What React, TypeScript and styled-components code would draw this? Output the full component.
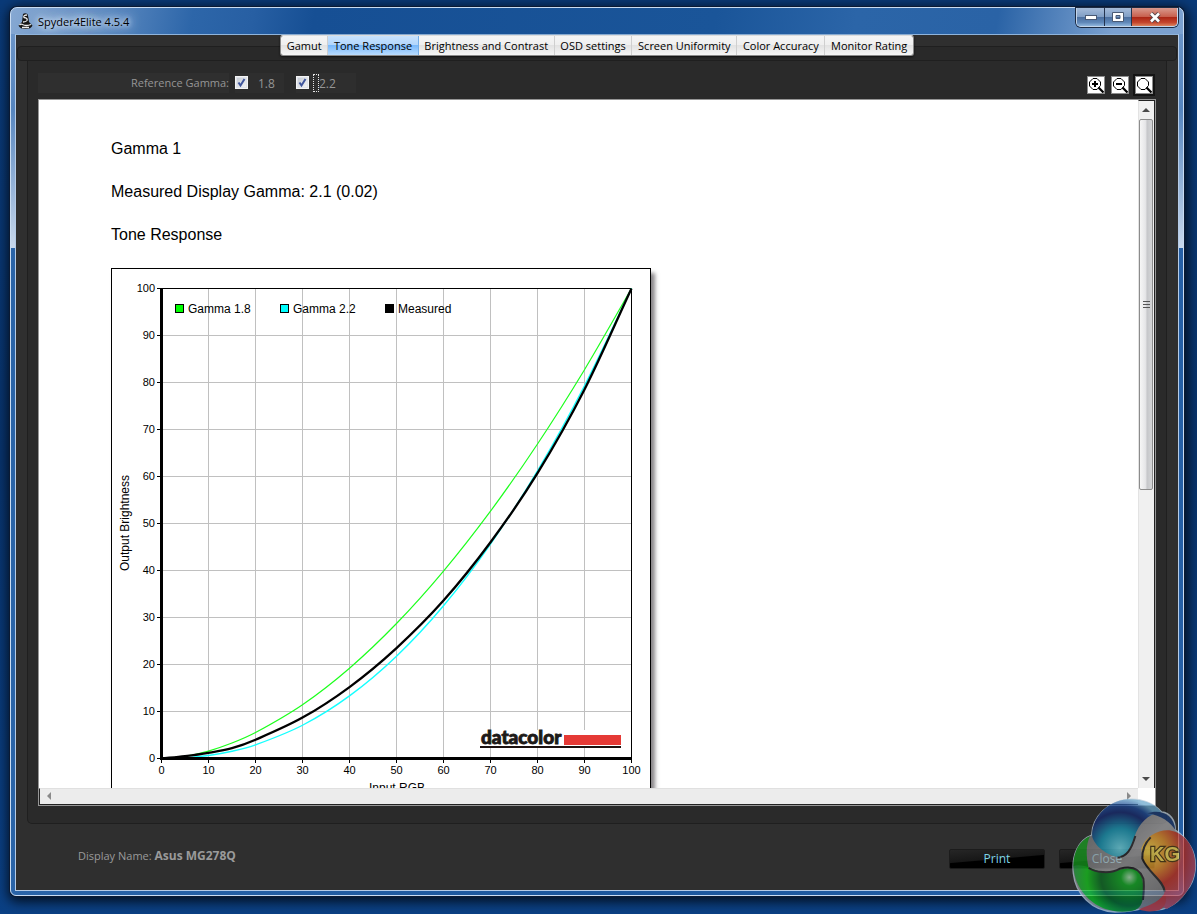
import React, { useState } from "react";
import styled, { createGlobalStyle, css } from "styled-components";

const ui = `"Open Sans", "Noto Sans", sans-serif`;
const arial = `"Liberation Sans", Arial, sans-serif`;

const GlobalStyle = createGlobalStyle`
  *, *::before, *::after { box-sizing: border-box; }
  body { margin: 0; background: #093774; font-family: ${ui}; font-size: 11px; }
  button { font: inherit; padding: 0; margin: 0; border: 0; }
  p { margin: 0; }
`;

const Desktop = styled.div`
  display: flex;
  height: 100vh;
  min-height: 480px;
  padding: 7px 13px 18px 10px;
  overflow: hidden;
  background: linear-gradient(#0a3a78, #08336c 50%, #0b4084);
`;

const Window = styled.div`
  flex: 1;
  min-width: 0;
  display: flex;
  flex-direction: column;
  padding: 0 4px 4px;
  border: 1px solid #c9dcf2;
  border-radius: 7px 7px 6px 6px;
  box-shadow: 0 0 0 1px #0b1a33, 1px 3px 12px 3px rgba(0, 0, 0, 0.75);
  background:
    linear-gradient(100deg, #86a8d2 0, #5f8cc2 90px, #2d66a9 180px, #275fa3 240px, #164f94 300px, #1a5599 60%, #2b65a8 72%, #2a63a6 84%, #7ba1d0 94%) top / 100% 26px no-repeat,
    linear-gradient(#6a94c8, #5585bf 35%, #c8d8ec) 0 26px / 100% 214px no-repeat,
    linear-gradient(90deg, #2a64a8, #1b569c 50%, #2660a6);
`;

const TitleBar = styled.header`
  display: flex;
  align-items: flex-start;
  justify-content: space-between;
  height: 26px;
  flex: none;
`;

const Title = styled.h1`
  display: flex;
  align-items: center;
  gap: 5px;
  margin: 0;
  height: 26px;
  padding-left: 3px;
  font-size: 11px;
  font-weight: 400;
  color: #000;
  text-shadow: 0 0 5px #dde9f7, 0 0 8px #dde9f7, 0 0 12px #c5d8ee, 0 0 14px #c5d8ee;
`;

const Controls = styled.div`
  display: flex;
  height: 19px;
  margin-right: 1px;
  border: 1px solid #c3d5ea;
  border-top: 0;
  border-radius: 0 0 5px 5px;
  overflow: hidden;
  box-shadow: 0 0 0 1px #1c2b44;
`;

const ControlButton = styled.button<{ $close?: boolean }>`
  width: ${(p) => (p.$close ? 46 : 27)}px;
  display: grid;
  place-items: center;
  border-left: 1px solid #24344f;
  background: ${(p) =>
    p.$close
      ? "linear-gradient(#d99a8e, #c8604e 48%, #a92414 50%, #c4442c 80%, #dc8560)"
      : "linear-gradient(#a5bcda, #819fc6 48%, #4b6f9f 50%, #5f87b8 80%, #90b6dd)"};
  &:first-child { border-left: 0; }
`;

const Client = styled.main`
  flex: 1;
  min-height: 0;
  display: flex;
  flex-direction: column;
  border: 1px solid #b5cbe6;
  border-top-color: #8fb4dc;
  background: #2f2f2f;
`;

const TabArea = styled.div`
  position: relative;
  height: 26px;
  flex: none;
  margin: 0 1px;
  display: flex;
  justify-content: center;
  align-items: flex-start;
  &::before {
    content: "";
    position: absolute;
    inset: 11px 0 0;
    border: 1px solid #1f1f1f;
    border-radius: 4px;
    background: #292929;
  }
`;

const TabList = styled.div`
  position: relative;
  display: flex;
  min-width: 634px;
  height: 21px;
  border: 1px solid #8a8a8a;
  border-top-color: #dcdcdc;
  border-radius: 3px;
  overflow: hidden;
  box-shadow: 0 1px 2px #111;
`;

const Tab = styled.button<{ $active: boolean }>`
  flex: 1 0 auto;
  padding: 0 5px;
  line-height: 19px;
  color: #000;
  white-space: nowrap;
  border-right: 1px solid #cfcfcf;
  background: linear-gradient(#f5f5f5, #efefef 48%, #e2e2e2 50%, #f6f6f6);
  &:last-child { border-right: 0; }
  ${(p) =>
    p.$active &&
    css`
      background: linear-gradient(#c8e2fd, #b3d7fc 45%, #79b9fb 50%, #b9dcff);
      border-right-color: #74aee8;
    `}
`;

const Panel = styled.section`
  flex: 1;
  min-height: 0;
  display: flex;
  flex-direction: column;
  margin: 0 11px;
  padding: 12px 10px 17px;
  border: 1px solid #1f1f1f;
  border-top: 0;
  border-radius: 0 0 5px 5px;
  background: #2a2a2a;
`;

const Toolbar = styled.div`
  flex: none;
  display: flex;
  align-items: flex-start;
  height: 26px;
  color: #959595;
`;

const ToolLabel = styled.span`
  width: 191px;
  height: 20px;
  line-height: 20px;
  text-align: right;
  background: #2f2f2f;
`;

const Options = styled.div`
  display: flex;
  gap: 12px;
  margin-left: 6px;
`;

const Option = styled.label<{ $width: number }>`
  display: flex;
  align-items: center;
  width: ${(p) => p.$width}px;
  height: 20px;
  font-size: 12px;
  background: #2e2e2e;
`;

const Check = styled.span`
  display: grid;
  width: 13px;
  height: 13px;
  margin-bottom: 2px;
  svg, input { grid-area: 1 / 1; }
  svg { pointer-events: none; }
`;

const CheckInput = styled.input`
  appearance: none;
  width: 13px;
  height: 13px;
  margin: 0;
  border: 1px solid #f4f4f4;
  background: linear-gradient(135deg, #c3c8d0, #f5f6f8);
  box-shadow: inset 0 0 0 1px #dfe3ea;
`;

const OptionText = styled.span<{ $focus?: boolean }>`
  height: 18px;
  line-height: 19px;
  margin-left: 4px;
  &::before {
    content: "";
    display: inline-block;
    vertical-align: top;
    width: 6px;
    height: 18px;
    ${(p) => p.$focus && "border: 1px dotted #e4e4e4;"}
  }
`;

const ZoomGroup = styled.div`
  display: flex;
  gap: 6px;
  margin: 3px 3px 0 auto;
`;

const ZoomButton = styled.button<{ $focus?: boolean }>`
  display: grid;
  width: 18px;
  height: 18px;
  border: 1px solid #8d8d8d;
  background: #fff;
  ${(p) => p.$focus && "box-shadow: 0 0 0 2px #141414;"}
`;

const Viewer = styled.div`
  flex: 1;
  min-height: 0;
  display: grid;
  grid-template-columns: minmax(0, 1fr) 17px;
  grid-template-rows: minmax(0, 1fr) 17px;
  border: 1px solid #969696;
  background: #fff;
`;

const Report = styled.article`
  overflow: hidden;
  padding: 39px 0 0 72px;
  font-family: ${arial};
  font-size: 16px;
  line-height: 19px;
  color: #000;
`;

const Line = styled.p`
  margin-bottom: 24px;
`;

const ChartSvg = styled.svg`
  display: block;
  background: #fff;
  box-shadow: 4px 5px 4px rgba(60, 55, 60, 0.6);
  font-family: ${arial};
`;

const Wordmark = styled.text`
  font-family: Lato, ${arial};
  font-size: 19px;
  font-weight: 900;
  stroke-width: 0.9px;
`;

const ScrollBar = styled.div<{ $horizontal?: boolean }>`
  display: flex;
  flex-direction: ${(p) => (p.$horizontal ? "row" : "column")};
  justify-content: space-between;
  background: ${(p) => (p.$horizontal ? "#ececec" : "#f0f0f0")};
  ${(p) =>
    p.$horizontal
      ? "border-bottom: 1px solid #222; border-left: 1px solid #222; border-top: 1px solid #e0e0e0;"
      : "border-right: 1px solid #222; border-top: 1px solid #222; border-left: 1px solid #e3e3e3;"}
`;

const ArrowButton = styled.button<{ $wide: boolean }>`
  flex: none;
  display: grid;
  place-items: center;
  width: ${(p) => (p.$wide ? 18 : 14)}px;
  height: ${(p) => (p.$wide ? 14 : 18)}px;
  background: transparent;
`;

const Thumb = styled.div`
  flex: 37;
  display: grid;
  place-items: center;
  margin-right: 1px;
  border: 1px solid #8c8c8c;
  border-radius: 2px;
  background: linear-gradient(90deg, #f6f6f6, #e6e6e8 45%, #c6c7ca 60%, #d5d6d8);
`;

const Track = styled.div`
  flex: 28;
`;

const Footer = styled.footer`
  flex: none;
  display: flex;
  align-items: center;
  justify-content: space-between;
  height: 66px;
  padding: 4px 23px 0 62px;
  color: #9a9a9a;
`;

const DisplayName = styled.p`
  padding-bottom: 8px;
  b { font-size: 12px; }
`;

const Actions = styled.div`
  display: flex;
  gap: 14px;
`;

const ActionButton = styled.button`
  width: 96px;
  height: 20px;
  font-size: 12px;
  line-height: 18px;
  border: 1px solid #1c1c1c;
  border-radius: 2px;
  color: #7fd6e8;
  background: linear-gradient(175deg, #262626, #171717 48%, #000 52%);
`;

const Watermark = styled.svg`
  position: fixed;
  right: 0;
  bottom: 0;
  pointer-events: none;
  opacity: 0.72;
`;

const tabs = [
  "Gamut",
  "Tone Response",
  "Brightness and Contrast",
  "OSD settings",
  "Screen Uniformity",
  "Color Accuracy",
  "Monitor Rating",
];

type Point = [number, number];

const left = 50.5;
const bottom = 490.5;
const unit = 4.7;
const steps = [0, 10, 20, 30, 40, 50, 60, 70, 80, 90, 100];

const power = (gamma: number): Point[] =>
  [0, 5, 10, 15, 20, 30, 40, 50, 60, 70, 80, 90, 100].map((v) => [v, 100 * Math.pow(v / 100, gamma)]);

const measured: Point[] = [
  [0, 0], [5, 0.5], [10, 1.2], [15, 2.2], [20, 4], [30, 8.7], [40, 15.2],
  [50, 23.5], [60, 33.6], [70, 46], [80, 60.7], [90, 78.5], [100, 100],
];

/* Smooth curve through the points, in chart coordinates. */
function curve(points: Point[]) {
  const p = points.map(([x, y]): Point => [left + x * unit, bottom - y * unit]);
  let d = `M${p[0][0]} ${p[0][1]}`;
  for (let i = 0; i < p.length - 1; i++) {
    const a = p[Math.max(i - 1, 0)];
    const b = p[i];
    const c = p[i + 1];
    const e = p[Math.min(i + 2, p.length - 1)];
    const w = c[0] - b[0];
    const s1 = (c[1] - a[1]) / (c[0] - a[0]);
    const s2 = (e[1] - b[1]) / (e[0] - b[0]);
    d += ` C${b[0] + w / 3} ${b[1] + (s1 * w) / 3} ${c[0] - w / 3} ${c[1] - (s2 * w) / 3} ${c[0]} ${c[1]}`;
  }
  return d;
}

const legend = [
  { x: 64, name: "Gamma 1.8", color: "#00ff00" },
  { x: 169, name: "Gamma 2.2", color: "#00ffff" },
  { x: 274, name: "Measured", color: "#000" },
];

function Chart() {
  return (
    <ChartSvg width="540" height="540" viewBox="0 0 540 540" role="img" aria-label="Tone Response">
      <rect x="0.5" y="0.5" width="539" height="539" fill="#fff" stroke="#000" />
      {steps.slice(1, 10).map((v) => (
        <g key={v} stroke="#c0c0c0">
          <path d={`M${left + v * unit} 20V490`} />
          <path d={`M51 ${bottom - v * unit}H520`} />
        </g>
      ))}
      <path d="M50 20.5H520.5V490" fill="none" stroke="#000" />
      <path d={curve(power(1.8))} fill="none" stroke="#1cff1c" strokeWidth="1.2" />
      <path d={curve(power(2.2))} fill="none" stroke="#14ffff" strokeWidth="1.4" />
      <path d={curve(measured)} fill="none" stroke="#000" strokeWidth="2.3" />
      <path d="M50.5 20V492M49 490.5H521" stroke="#000" strokeWidth="3" />
      {steps.map((v) => (
        <g key={v} fontSize="11">
          <path d={`M46 ${bottom - v * unit}H50M${left + v * unit} 491V495`} stroke="#000" />
          <text x="44" y={494 - v * unit} textAnchor="end">{v}</text>
          <text x={left + v * unit} y="506" textAnchor="middle">{v}</text>
        </g>
      ))}
      {legend.map((l) => (
        <g key={l.name}>
          <rect x={l.x + 0.5} y="36.5" width="8" height="8" fill={l.color} stroke="#000" />
          <text x={l.x + 13} y="45" fontSize="12">{l.name}</text>
        </g>
      ))}
      <rect x="369" y="462" width="142" height="18" fill="#fff" />
      <Wordmark x="370" y="476" fill="#1d1a18" stroke="#1d1a18">datacolor</Wordmark>
      <rect x="453" y="467" width="57" height="10" fill="#e53a36" />
      <rect x="369" y="478" width="141" height="2" fill="#1d1210" />
      <text x="286" y="524" fontSize="12" textAnchor="middle">Input RGB</text>
      <text transform="translate(18 255) rotate(-90)" fontSize="12" textAnchor="middle">Output Brightness</text>
    </ChartSvg>
  );
}

function Lens({ sign }: { sign?: "plus" | "minus" }) {
  return (
    <svg width="16" height="16" viewBox="0 0 16 16" fill="none" stroke="#000">
      <path d="M5 1.5H9L12.5 5V8.5L9 12.5H5L1.5 9V5Z" />
      <path d="M10.5 10.5L15.5 15.5" strokeWidth="2.2" />
      {sign && <path d="M4 7H10" strokeWidth="2" />}
      {sign === "plus" && <path d="M7 4V10" strokeWidth="2" />}
    </svg>
  );
}

function GammaOption({ text, width, focus }: { text: string; width: number; focus?: boolean }) {
  const [on, setOn] = useState(true);
  return (
    <Option $width={width}>
      <Check>
        <CheckInput type="checkbox" checked={on} onChange={() => setOn(!on)} />
        {on && (
          <svg width="13" height="13" viewBox="0 0 13 13">
            <path d="M3.5 6.5L5.5 9.5L9.5 3" fill="none" stroke="#3f559c" strokeWidth="2" />
          </svg>
        )}
      </Check>
      <OptionText $focus={focus}>{text}</OptionText>
    </Option>
  );
}

const arrows = { up: "M4 0L8 4H0Z", down: "M0 0H8L4 4Z", left: "M4 0V8L0 4Z", right: "M0 0L4 4L0 8Z" };

function Arrow({ dir }: { dir: keyof typeof arrows }) {
  const sideways = dir === "left" || dir === "right";
  return (
    <ArrowButton $wide={sideways} aria-label={`Scroll ${dir}`}>
      <svg width={sideways ? 4 : 8} height={sideways ? 8 : 4}>
        <path d={arrows[dir]} fill={sideways ? "#8a8a8a" : "#4a4a4a"} />
      </svg>
    </ArrowButton>
  );
}

function KitGuruMark() {
  return (
    <Watermark width="137" height="134" viewBox="0 0 411 402" aria-hidden="true">
      <defs>
        <radialGradient id="blue" gradientUnits="userSpaceOnUse" cx="180" cy="205" r="150">
          <stop offset="0" stopColor="#6fd8e8" />
          <stop offset="0.4" stopColor="#1595b4" />
          <stop offset="0.72" stopColor="#152a72" />
          <stop offset="0.86" stopColor="#1b4896" />
          <stop offset="1" stopColor="#66a6cc" />
        </radialGradient>
        <radialGradient id="green" gradientUnits="userSpaceOnUse" cx="208" cy="292" r="170">
          <stop offset="0" stopColor="#a8e0b0" />
          <stop offset="0.15" stopColor="#0faa22" />
          <stop offset="0.5" stopColor="#0a6a22" />
          <stop offset="0.75" stopColor="#14c81c" />
          <stop offset="1" stopColor="#2f9f4c" />
        </radialGradient>
        <radialGradient id="red" gradientUnits="userSpaceOnUse" cx="265" cy="215" r="160">
          <stop offset="0" stopColor="#fcdc50" />
          <stop offset="0.35" stopColor="#e0922c" />
          <stop offset="0.65" stopColor="#c0342a" />
          <stop offset="1" stopColor="#b84a5c" />
        </radialGradient>
        <linearGradient id="steel" x1="0" y1="0" x2="1" y2="1">
          <stop offset="0" stopColor="#58585a" />
          <stop offset="0.5" stopColor="#a4a4a6" />
          <stop offset="1" stopColor="#606062" />
        </linearGradient>
      </defs>
      <path d="M95 165C55 180 34 225 40 280C46 340 95 395 165 396C205 396 232 388 252 386C300 402 350 378 378 335C410 300 415 240 392 200C380 178 362 160 346 150C346 120 330 98 305 96C280 66 240 55 203 58C145 64 97 110 95 165Z" fill="url(#steel)" stroke="#b9ccdb" strokeWidth="4" />
      <path d="M97 172C92 118 140 62 203 58C248 56 285 72 303 95C262 103 238 130 224 168C214 200 200 228 180 232C150 230 108 205 97 172Z" fill="url(#blue)" />
      <path d="M262 100C300 86 342 102 346 150C332 128 305 106 262 100Z" fill="#183b76" />
      <path d="M90 168C58 182 40 215 40 258C55 267 70 268 86 264C78 228 77 196 90 168Z" fill="#18a020" />
      <path d="M40 258C62 250 86 262 115 273C150 282 188 262 218 265C246 270 252 300 249 345C249 370 240 388 218 392C130 410 45 350 40 258Z" fill="url(#green)" />
      <path d="M244 205C258 166 300 146 334 152C382 162 408 210 406 262C404 312 368 364 322 386C302 390 312 350 314 330C308 298 262 272 248 238Z" fill="url(#red)" />
      <path d="M236 388C262 376 290 374 314 340C322 360 318 380 300 389C280 396 256 396 236 388Z" fill="#c63c3c" />
      <path d="M86 264C104 276 150 284 180 266C212 258 238 262 250 296C254 320 250 345 249 360M226 168C214 208 200 232 172 232M314 334C310 300 262 276 247 236C246 212 254 190 272 172" fill="none" stroke="#2b2b2e" strokeWidth="6" />
      <text x="270" y="244" fontFamily="Liberation Sans" fontWeight="700" fontSize="60" fill="#f4da58" stroke="#4a3610" strokeWidth="7" paintOrder="stroke">KG</text>
    </Watermark>
  );
}

export default function App() {
  const [active, setActive] = useState("Tone Response");
  return (
    <Desktop>
      <GlobalStyle />
      <Window>
        <TitleBar>
          <Title>
            <svg width="15" height="16" viewBox="0 0 15 16">
              <path d="M5 1Q7 -0.5 9.5 1L10.5 5L11 9L14.5 12.5Q13 16 7.500 16Q2 16 0.500 12.500L4 9L4.500 5Z" fill="#141414" />
              <path d="M9 2Q5 2 6 4.500Q10 5 9 7.500Q8 9 5 9M1.500 12Q3 10.500 4.500 11.500Q8 13.500 13 11.500M4 14.500H11" fill="none" stroke="#ededed" strokeWidth="1.300" />
            </svg>
            Spyder4Elite 4.5.4
          </Title>
          <Controls>
            <ControlButton aria-label="Minimize">
              <svg width="12" height="5"><rect x="0.500" y="0.500" width="11" height="4" fill="#fff" stroke="#4a5a74" /></svg>
            </ControlButton>
            <ControlButton aria-label="Maximize">
              <svg width="12" height="10">
                <path d="M0.500 0.500H11.500V9.500H0.500Z M4 3.500V6.500H8V3.500Z" fill="#fff" fillRule="evenodd" stroke="#4a5a74" />
              </svg>
            </ControlButton>
            <ControlButton $close aria-label="Close window">
              <svg width="12" height="11" viewBox="0 0 12 11">
                <path d="M2 1.500L10 9.500M10 1.500L2 9.500" stroke="#56464c" strokeWidth="4.500" />
                <path d="M2 1.500L10 9.500M10 1.500L2 9.500" stroke="#fff" strokeWidth="2.600" />
              </svg>
            </ControlButton>
          </Controls>
        </TitleBar>
        <Client>
          <TabArea>
            <TabList role="tablist">
              {tabs.map((t) => (
                <Tab key={t} role="tab" aria-selected={t === active} $active={t === active} onClick={() => setActive(t)}>
                  {t}
                </Tab>
              ))}
            </TabList>
          </TabArea>
          <Panel>
            <Toolbar>
              <ToolLabel>Reference Gamma:</ToolLabel>
              <Options>
                <GammaOption text="1.8" width={49} />
                <GammaOption text="2.2" width={60} focus />
              </Options>
              <ZoomGroup>
                <ZoomButton aria-label="Zoom in"><Lens sign="plus" /></ZoomButton>
                <ZoomButton aria-label="Zoom out"><Lens sign="minus" /></ZoomButton>
                <ZoomButton aria-label="Actual size" $focus><Lens /></ZoomButton>
              </ZoomGroup>
            </Toolbar>
            <Viewer>
              <Report>
                <Line>Gamma 1</Line>
                <Line>Measured Display Gamma: 2.1 (0.02)</Line>
                <Line>Tone Response</Line>
                <Chart />
              </Report>
              <ScrollBar>
                <Arrow dir="up" />
                <Thumb>
                  <svg width="7" height="8"><path d="M0 0.500H7M0 3.500H7M0 6.500H7" stroke="#555" /></svg>
                </Thumb>
                <Track />
                <Arrow dir="down" />
              </ScrollBar>
              <ScrollBar $horizontal>
                <Arrow dir="left" />
                <Arrow dir="right" />
              </ScrollBar>
            </Viewer>
          </Panel>
          <Footer>
            <DisplayName>Display Name: <b>Asus MG278Q</b></DisplayName>
            <Actions>
              <ActionButton>Print</ActionButton>
              <ActionButton>Close</ActionButton>
            </Actions>
          </Footer>
        </Client>
      </Window>
      <KitGuruMark />
    </Desktop>
  );
}
